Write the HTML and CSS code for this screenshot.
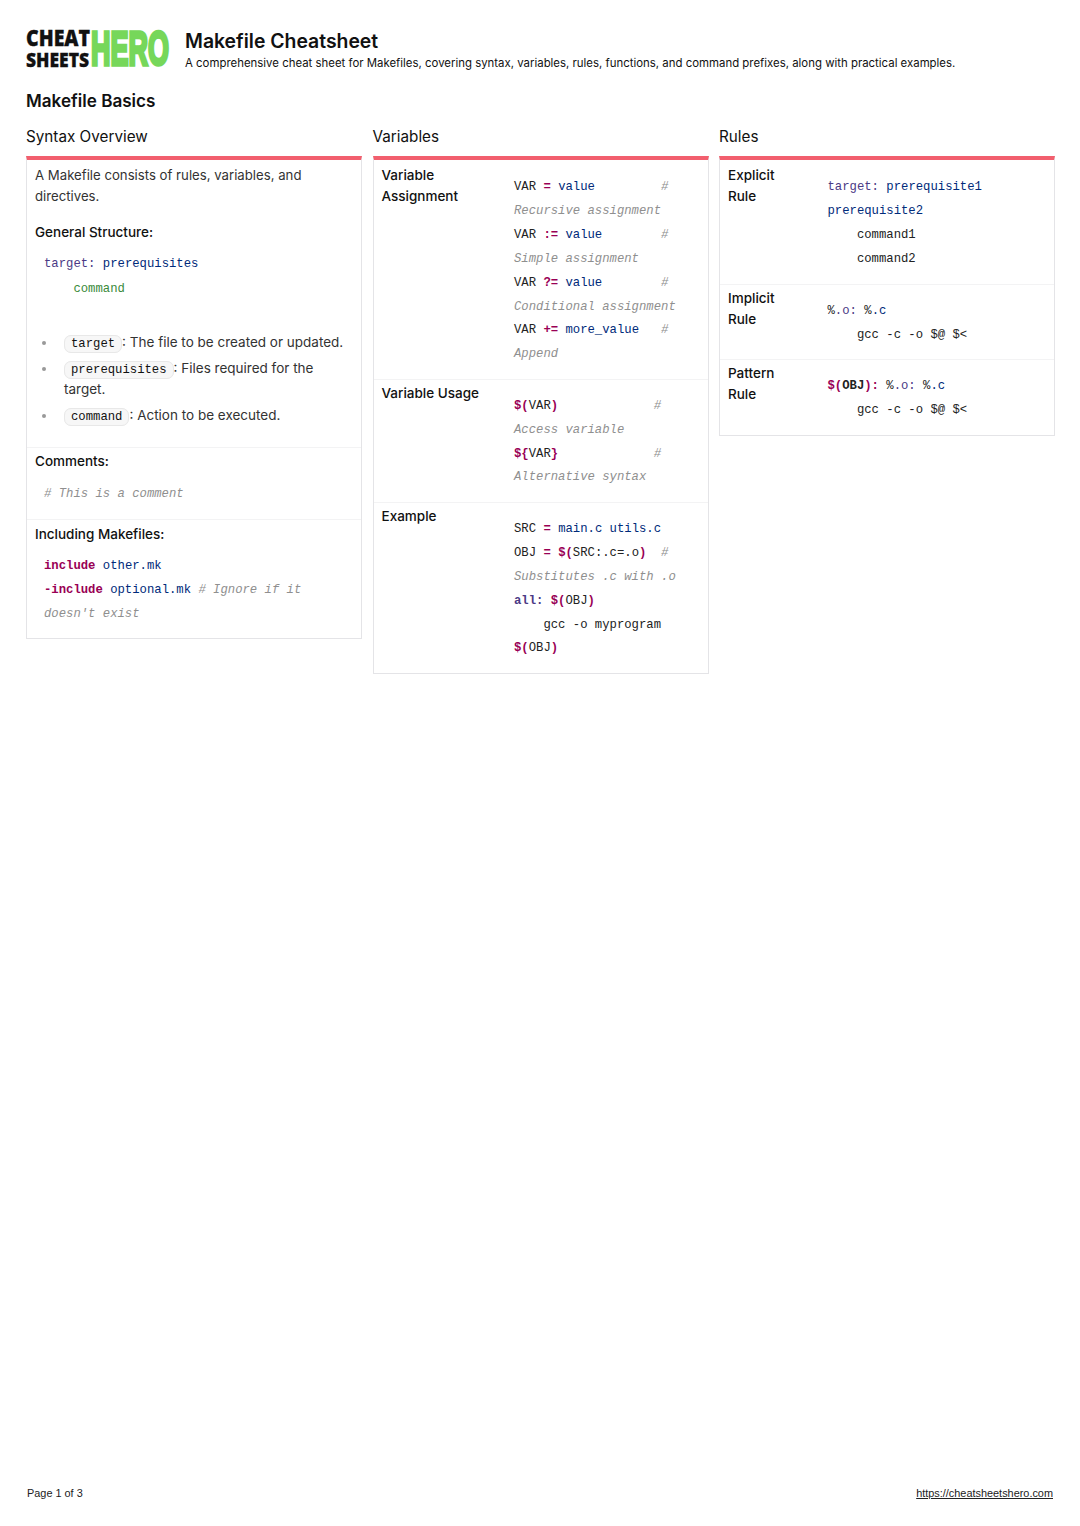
FILE: index.html
```html
<!DOCTYPE html>
<html lang="en">
<head>
<meta charset="utf-8">
<title>Makefile Cheatsheet</title>
<link rel="stylesheet" href="styles.css">
</head>
<body>
<header class="head">
  <div class="logo" aria-label="Cheat Sheets Hero">
    <div class="logo-stack">
      <span class="logo-a">CHEAT</span>
      <span class="logo-b">SHEETS</span>
    </div>
    <span class="logo-hero">HERO</span>
  </div>
  <div class="head-text">
    <h1>Makefile Cheatsheet</h1>
    <p>A comprehensive cheat sheet for Makefiles, covering syntax, variables, rules, functions, and command prefixes, along with practical examples.</p>
  </div>
</header>
<h2 class="section">Makefile Basics</h2>
<main class="cols">
  <section class="col">
    <h3>Syntax Overview</h3>
    <div class="card">
      <div class="block first">
        <p class="para">A Makefile consists of rules, variables, and directives.</p>
        <p class="sub gs">General Structure:</p>
        <pre class="code loose"><span class="tg">target:</span> <span class="bl">prerequisites</span>
    <span class="gr">command</span></pre>
        <ul>
          <li><code>target</code>: The file to be created or updated.</li>
          <li><code>prerequisites</code>: Files required for the target.</li>
          <li><code>command</code>: Action to be executed.</li>
        </ul>
      </div>
      <div class="block second">
        <p class="sub">Comments:</p>
        <pre class="code"><span class="cm"># This is a comment</span></pre>
      </div>
      <div class="block third">
        <p class="sub">Including Makefiles:</p>
        <pre class="code"><b class="kw">include</b> <span class="bl">other.mk</span>
<b class="kw">-include</b> <span class="bl">optional.mk</span> <span class="cm"># Ignore if it</span>
<span class="cm">doesn't exist</span></pre>
      </div>
    </div>
  </section>
  <section class="col">
    <h3>Variables</h3>
    <div class="card">
      <div class="row wide">
        <div class="label">Variable Assignment</div>
        <pre class="code">VAR <b class="kw">=</b> <span class="bl">value</span>         <span class="cm">#</span>
<span class="cm">Recursive assignment</span>
VAR <b class="kw">:=</b> <span class="bl">value</span>        <span class="cm">#</span>
<span class="cm">Simple assignment</span>
VAR <b class="kw">?=</b> <span class="bl">value</span>        <span class="cm">#</span>
<span class="cm">Conditional assignment</span>
VAR <b class="kw">+=</b> <span class="bl">more_value</span>   <span class="cm">#</span>
<span class="cm">Append</span></pre>
      </div>
      <div class="row wide">
        <div class="label">Variable Usage</div>
        <pre class="code"><b class="kw">$(</b>VAR<b class="kw">)</b>             <span class="cm">#</span>
<span class="cm">Access variable</span>
<b class="kw">${</b>VAR<b class="kw">}</b>             <span class="cm">#</span>
<span class="cm">Alternative syntax</span></pre>
      </div>
      <div class="row wide">
        <div class="label">Example</div>
        <pre class="code">SRC <b class="kw">=</b> <span class="bl">main.c utils.c</span>
OBJ <b class="kw">=</b> <b class="kw">$(</b>SRC:.c=.o<b class="kw">)</b>  <span class="cm">#</span>
<span class="cm">Substitutes .c with .o</span>
<b class="tg">all:</b> <b class="kw">$(</b>OBJ<b class="kw">)</b>
    gcc -o myprogram
<b class="kw">$(</b>OBJ<b class="kw">)</b></pre>
      </div>
    </div>
  </section>
  <section class="col">
    <h3>Rules</h3>
    <div class="card">
      <div class="row narrow">
        <div class="label">Explicit Rule</div>
        <pre class="code"><span class="tg">target:</span> <span class="bl">prerequisite1</span>
<span class="bl">prerequisite2</span>
    command1
    command2</pre>
      </div>
      <div class="row narrow">
        <div class="label">Implicit Rule</div>
        <pre class="code">%<span class="tg">.o:</span> %<span class="bl">.c</span>
    gcc -c -o $@ $&lt;</pre>
      </div>
      <div class="row narrow">
        <div class="label">Pattern Rule</div>
        <pre class="code"><b class="kw">$(</b><b>OBJ</b><b class="kw">):</b> %<span class="tg">.o:</span> %<span class="bl">.c</span>
    gcc -c -o $@ $&lt;</pre>
      </div>
    </div>
  </section>
</main>
<footer class="foot">
  <span>Page 1 of 3</span>
  <a href="https://cheatsheetshero.com">https://cheatsheetshero.com</a>
</footer>
</body>
</html>
```
FILE: styles.css
```css
* { box-sizing: border-box; }
html, body { margin: 0; padding: 0; }
body {
  width: 1080px;
  height: 1526px;
  padding: 28px 25px 0 26px;
  display: flex;
  flex-direction: column;
  font-family: Inter, "Open Sans", sans-serif;
  font-size: 13.2px;
  line-height: 21px;
  color: #333;
  background: #fff;
}
.head { display: flex; align-items: flex-start; height: 42px; }
.logo { flex: none; width: 159px; display: flex; height: 42px; }
.logo-stack { width: 64px; display: flex; flex-direction: column; font-family: "Open Sans", sans-serif; font-weight: 800; color: #111; }
.logo-a, .logo-b { display: block; white-space: nowrap; transform-origin: 0 0; -webkit-text-stroke: 0.3px #111; }
.logo-a { font-size: 21px; line-height: 21px; margin-top: -2px; transform: scale(0.93, 1.12); }
.logo-b { font-size: 20px; line-height: 21px; margin-top: 2px; transform: scale(0.875, 1); }
.logo-hero {
  display: block;
  font-family: "Liberation Sans", sans-serif;
  font-weight: 700;
  font-size: 27px;
  line-height: 27px;
  color: #76d75a;
  -webkit-text-stroke: 2px #76d75a;
  transform-origin: 0 0;
  transform: scale(1, 1.8);
  margin-top: -3px;
  margin-left: 1px;
  white-space: nowrap;
}
h1 { margin: 0; font-size: 19.4px; line-height: 26px; font-weight: 600; color: #111; }
.head-text p { margin: 1px 0 0; font-size: 11.42px; line-height: 16px; color: #111; }
.section { margin: 20px 0 0; font-size: 17.1px; line-height: 22px; font-weight: 600; color: #111; }
.cols { display: grid; grid-template-columns: repeat(3, 336px); column-gap: 10.5px; margin-top: 13px; align-items: start; }
h3 { margin: 0; font-size: 15.25px; line-height: 24px; font-weight: 400; color: #111; }
.card { margin-top: 7px; border: 1px solid #e4e4e7; border-top: 4px solid #f25f6e; }
.block { padding: 5px 8px 0; border-top: 1px solid #f3f3f4; }
.block.first { border-top: 0; padding-bottom: 16px; }
.block.second { padding-top: 3px; padding-bottom: 13px; }
.block.third { padding-top: 4px; padding-bottom: 12px; }
.para { margin: 0; }
.sub { margin: 0; font-weight: 500; font-size: 13.5px; color: #111; }
.sub.gs { margin-top: 15px; }
.code {
  margin: 0;
  padding: 0 9px;
  font-family: "Liberation Mono", monospace;
  font-size: 12.25px;
  line-height: 23.9px;
  color: #222;
  white-space: pre;
}
.block .code { line-height: 24px; margin-top: 10px; }
.block.third .code { margin-top: 9px; }
.block .code.loose { line-height: 25px; margin-top: 9px; margin-bottom: 30px; }
.kw { color: #990055; font-weight: 700; }
.code b { font-weight: 700; }
.bl { color: #002a7a; }
.tg { color: #4b3a85; }
.gr { color: #3b8a3b; }
.cm { color: #8f8f8f; font-style: italic; }
ul { margin: 0; padding: 0 0 0 29px; list-style: none; color: #333; font-size: 13.5px; }
li { margin-bottom: 5px; }
li::before {
  content: "";
  display: inline-block;
  width: 4px;
  height: 4px;
  margin-left: -22px;
  margin-right: 18px;
  border-radius: 50%;
  background: #999;
  vertical-align: middle;
}
code {
  font-family: "Liberation Mono", monospace;
  font-size: 12.25px;
  line-height: 1;
  color: #111;
  padding: 1px 6px;
  background: #f7f7f7;
  border: 1px solid #e8e8e8;
  border-radius: 7px;
}
.row { display: grid; border-top: 1px solid #f3f3f4; padding: 0 8px 11.5px; }
.row:first-child { border-top: 0; }
.row.wide { grid-template-columns: 123.5px 1fr; }
.row.narrow { grid-template-columns: 90.5px 1fr; }
.row.narrow:first-child { padding-bottom: 12px; }
.row.narrow:last-child { padding-bottom: 12.5px; }
.row .code { margin-top: 15px; }
.row:first-child .code { margin-top: 16px; }
.label { padding-top: 3px; font-weight: 500; font-size: 13.5px; color: #111; }
.row:first-child .label { padding-top: 5px; }
.row.narrow .label { max-width: 66px; }
.row.wide .label { max-width: 110px; }
.foot {
  margin-top: auto;
  padding: 0 2px 25px 1px;
  display: flex;
  justify-content: space-between;
  font-family: "Liberation Sans", sans-serif;
  font-size: 10.9px;
  line-height: 16px;
  color: #222;
}
.foot a { color: #222; }
```
